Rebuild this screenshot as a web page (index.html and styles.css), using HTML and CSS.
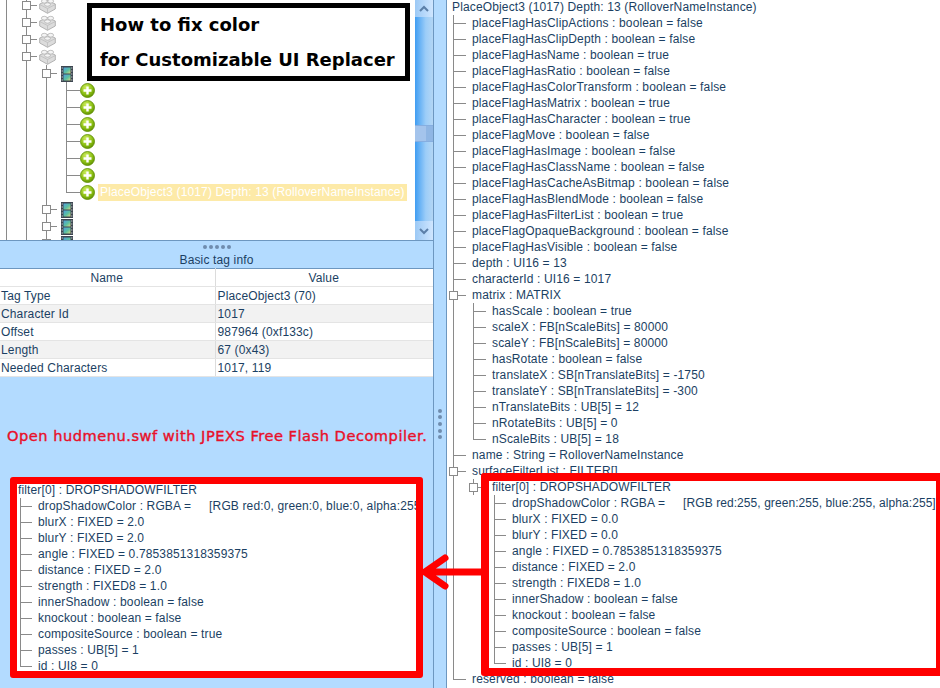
FILE: index.html
```html
<!DOCTYPE html>
<html lang="en">
<head>
<meta charset="utf-8">
<title>JPEXS tag info</title>
<link rel="stylesheet" href="styles.css">
</head>
<body>
<svg class="defs" width="0" height="0" aria-hidden="true">
  <defs>
    <linearGradient id="film" x1="0" y1="0" x2="1" y2="1"><stop offset="0" stop-color="#4f9fe0"/><stop offset=".55" stop-color="#5cc0a0"/><stop offset="1" stop-color="#d8d880"/></linearGradient>
    <radialGradient id="plusg" cx=".4" cy=".3" r=".8"><stop offset="0" stop-color="#cfee60"/><stop offset=".6" stop-color="#88bc10"/><stop offset="1" stop-color="#558400"/></radialGradient>
    <symbol id="lego" viewBox="0 0 17 17">
      <path d="M.7 7 8.500 3.500 16.300 7v5l-7.800 4.300L.7 12z" fill="#dcdcdc" stroke="#ababab" stroke-width=".9"/>
      <path d="M.7 7.500 8.500 11.500l7.800-4M8.500 11.500v4.800" fill="none" stroke="#bcbcbc" stroke-width=".8"/>
      <ellipse cx="5.300" cy="4.200" rx="2.900" ry="1.900" fill="#f4f4f4" stroke="#ababab" stroke-width=".7"/>
      <ellipse cx="11.700" cy="4.200" rx="2.900" ry="1.900" fill="#f4f4f4" stroke="#ababab" stroke-width=".7"/>
      <ellipse cx="8.500" cy="7.500" rx="2.900" ry="1.700" fill="#f4f4f4" stroke="#ababab" stroke-width=".7"/>
    </symbol>
    <symbol id="movie" viewBox="0 0 12 16">
      <rect width="12" height="16" fill="#3d4650"/>
      <rect x="2.500" y="1.500" width="7" height="6" fill="url(#film)"/>
      <rect x="2.500" y="8.500" width="7" height="6" fill="url(#film)"/>
      <path d="M.7 2h1M.7 5h1M.7 8h1M.7 11h1M.7 14h1M10.300 2h1M10.300 5h1M10.300 8h1M10.300 11h1M10.300 14h1" stroke="#e8e8e8" stroke-width="1.200"/>
    </symbol>
    <symbol id="plus" viewBox="0 0 15 15">
      <circle cx="7.500" cy="7.500" r="7" fill="url(#plusg)" stroke="#5c8c00" stroke-width=".8"/>
      <path d="M7.500 3.500v8M3.500 7.500h8" stroke="#fff" stroke-width="2.400"/>
    </symbol>
  </defs>
</svg>
<div class="app">
  <section class="left">
    <div class="tree-pane">
      <div class="tree-view">
        <div class="trow g2"><i class="box"></i><svg class="ico-lego"><use href="#lego"/></svg></div>
        <div class="trow g2"><i class="box"></i><svg class="ico-lego"><use href="#lego"/></svg></div>
        <div class="trow g2"><i class="box"></i><svg class="ico-lego"><use href="#lego"/></svg></div>
        <div class="trow g2"><i class="box"></i><svg class="ico-lego"><use href="#lego"/></svg></div>
        <div class="trow g3"><i class="box"></i><svg class="ico-movie"><use href="#movie"/></svg></div>
        <div class="trow g4"><i class="leaf"></i><svg class="ico-plus"><use href="#plus"/></svg></div>
        <div class="trow g4"><i class="leaf"></i><svg class="ico-plus"><use href="#plus"/></svg></div>
        <div class="trow g4"><i class="leaf"></i><svg class="ico-plus"><use href="#plus"/></svg></div>
        <div class="trow g4"><i class="leaf"></i><svg class="ico-plus"><use href="#plus"/></svg></div>
        <div class="trow g4"><i class="leaf"></i><svg class="ico-plus"><use href="#plus"/></svg></div>
        <div class="trow g4"><i class="leaf"></i><svg class="ico-plus"><use href="#plus"/></svg></div>
        <div class="trow g4 last"><i class="leaf"></i><svg class="ico-plus"><use href="#plus"/></svg><span class="sel">PlaceObject3 (1017) Depth: 13 (RolloverNameInstance)</span></div>
        <div class="trow g3"><i class="box"></i><svg class="ico-movie"><use href="#movie"/></svg></div>
        <div class="trow g3"><i class="box"></i><svg class="ico-movie"><use href="#movie"/></svg></div>
        <div class="trow g3"><i class="box"></i><svg class="ico-movie"><use href="#movie"/></svg></div>
      </div>
      <div class="scrollbar">
        <div class="sb-btn"><svg width="12" height="8" viewBox="0 0 12 8"><path d="M2 6l4-4 4 4" fill="none" stroke="#5b7fa8" stroke-width="2"/></svg></div>
        <div class="sb-track"><div class="sb-thumb"></div></div>
        <div class="sb-btn"><svg width="12" height="8" viewBox="0 0 12 8"><path d="M2 2l4 4 4-4" fill="none" stroke="#5b7fa8" stroke-width="2"/></svg></div>
      </div>
    </div>
    <div class="h-split"><i></i><i></i><i></i><i></i><i></i></div>
    <div class="info-title">Basic tag info</div>
    <table class="info">
      <tr class="head"><th>Name</th><th>Value</th></tr>
      <tr><td>Tag Type</td><td>PlaceObject3 (70)</td></tr>
      <tr class="alt"><td>Character Id</td><td>1017</td></tr>
      <tr><td>Offset</td><td>987964 (0xf133c)</td></tr>
      <tr class="alt"><td>Length</td><td>67 (0x43)</td></tr>
      <tr><td>Needed Characters</td><td>1017, 119</td></tr>
    </table>
    <p class="note">Open hudmenu.swf with JPEXS Free Flash Decompiler.</p>
    <div class="callout callout-left">
      <div class="r"><span>filter[0] : DROPSHADOWFILTER</span></div>
      <div class="r c"><span>dropShadowColor : RGBA =</span><span class="val">[RGB red:0, green:0, blue:0, alpha:255]</span></div>
      <div class="r c"><span>blurX : FIXED = 2.0</span></div>
      <div class="r c"><span>blurY : FIXED = 2.0</span></div>
      <div class="r c"><span>angle : FIXED = 0.7853851318359375</span></div>
      <div class="r c"><span>distance : FIXED = 2.0</span></div>
      <div class="r c"><span>strength : FIXED8 = 1.0</span></div>
      <div class="r c"><span>innerShadow : boolean = false</span></div>
      <div class="r c"><span>knockout : boolean = false</span></div>
      <div class="r c"><span>compositeSource : boolean = true</span></div>
      <div class="r c"><span>passes : UB[5] = 1</span></div>
      <div class="r c end"><span>id : UI8 = 0</span></div>
    </div>
  </section>
  <div class="v-split"><i></i><i></i><i></i><i></i><i></i></div>
  <section class="right">
    <div class="n"><span>PlaceObject3 (1017) Depth: 13 (RolloverNameInstance)</span></div>
    <div class="n l1"><span>placeFlagHasClipActions : boolean = false</span></div>
    <div class="n l1"><span>placeFlagHasClipDepth : boolean = false</span></div>
    <div class="n l1"><span>placeFlagHasName : boolean = true</span></div>
    <div class="n l1"><span>placeFlagHasRatio : boolean = false</span></div>
    <div class="n l1"><span>placeFlagHasColorTransform : boolean = false</span></div>
    <div class="n l1"><span>placeFlagHasMatrix : boolean = true</span></div>
    <div class="n l1"><span>placeFlagHasCharacter : boolean = true</span></div>
    <div class="n l1"><span>placeFlagMove : boolean = false</span></div>
    <div class="n l1"><span>placeFlagHasImage : boolean = false</span></div>
    <div class="n l1"><span>placeFlagHasClassName : boolean = false</span></div>
    <div class="n l1"><span>placeFlagHasCacheAsBitmap : boolean = false</span></div>
    <div class="n l1"><span>placeFlagHasBlendMode : boolean = false</span></div>
    <div class="n l1"><span>placeFlagHasFilterList : boolean = true</span></div>
    <div class="n l1"><span>placeFlagOpaqueBackground : boolean = false</span></div>
    <div class="n l1"><span>placeFlagHasVisible : boolean = false</span></div>
    <div class="n l1"><span>depth : UI16 = 13</span></div>
    <div class="n l1"><span>characterId : UI16 = 1017</span></div>
    <div class="n l1 open"><i class="box"></i><span>matrix : MATRIX</span></div>
    <div class="n l2"><span>hasScale : boolean = true</span></div>
    <div class="n l2"><span>scaleX : FB[nScaleBits] = 80000</span></div>
    <div class="n l2"><span>scaleY : FB[nScaleBits] = 80000</span></div>
    <div class="n l2"><span>hasRotate : boolean = false</span></div>
    <div class="n l2"><span>translateX : SB[nTranslateBits] = -1750</span></div>
    <div class="n l2"><span>translateY : SB[nTranslateBits] = -300</span></div>
    <div class="n l2"><span>nTranslateBits : UB[5] = 12</span></div>
    <div class="n l2"><span>nRotateBits : UB[5] = 0</span></div>
    <div class="n l2 end"><span>nScaleBits : UB[5] = 18</span></div>
    <div class="n l1"><span>name : String = RolloverNameInstance</span></div>
    <div class="n l1 open"><i class="box"></i><span>surfaceFilterList : FILTER[]</span></div>
    <div class="n l2 open"><i class="box"></i></div>
    <div class="n filler"></div>
    <div class="n filler"></div>
    <div class="n filler"></div>
    <div class="n filler"></div>
    <div class="n filler"></div>
    <div class="n filler"></div>
    <div class="n filler"></div>
    <div class="n filler"></div>
    <div class="n filler"></div>
    <div class="n filler"></div>
    <div class="n filler"></div>
    <div class="n l1 end"><span>reserved : boolean = false</span></div>
    <div class="callout callout-right">
      <div class="r"><span>filter[0] : DROPSHADOWFILTER</span></div>
      <div class="r c"><span>dropShadowColor : RGBA =</span><span class="val">[RGB red:255, green:255, blue:255, alpha:255]</span></div>
      <div class="r c"><span>blurX : FIXED = 0.0</span></div>
      <div class="r c"><span>blurY : FIXED = 0.0</span></div>
      <div class="r c"><span>angle : FIXED = 0.7853851318359375</span></div>
      <div class="r c"><span>distance : FIXED = 2.0</span></div>
      <div class="r c"><span>strength : FIXED8 = 1.0</span></div>
      <div class="r c"><span>innerShadow : boolean = false</span></div>
      <div class="r c"><span>knockout : boolean = false</span></div>
      <div class="r c"><span>compositeSource : boolean = false</span></div>
      <div class="r c"><span>passes : UB[5] = 1</span></div>
      <div class="r c end"><span>id : UI8 = 0</span></div>
    </div>
  </section>
  <svg class="arrow" width="62" height="40" viewBox="0 0 62 40"><path d="M60 19H4M24 5 4 19l20 14" fill="none" stroke="#ff0000" stroke-width="7" stroke-linecap="round"/></svg>
  <div class="title-box">
    <div>How to fix color</div>
    <div>for Customizable UI Replacer</div>
  </div>
</div>
</body>
</html>
```
FILE: styles.css
```css
* { box-sizing: border-box; }
html, body { margin: 0; padding: 0; }
body { width: 940px; height: 688px; overflow: hidden; background: #b3dbff; font-family: "Liberation Sans", Arial, sans-serif; font-size: 12px; letter-spacing: .14px; color: #1b3f63; }
.defs { display: block; height: 0; }
.app { position: relative; display: flex; width: 940px; height: 688px; overflow: hidden; }

.left { width: 433px; flex: none; display: flex; flex-direction: column; }
.tree-pane { height: 241px; flex: none; display: flex; background: #fff; border-bottom: 1px solid #6d97c0; overflow: hidden; }
.tree-view { flex: 1; margin-top: -3px; }
.scrollbar { width: 18px; flex: none; display: flex; flex-direction: column; }
.sb-btn { height: 17px; background: linear-gradient(90deg, #9cc9f5, #cfe6ff); display: flex; align-items: center; justify-content: center; }
.sb-btn:last-child { height: 19px; }
.sb-track { flex: 1; background: linear-gradient(90deg, #3f9df2, #9ccdf8 60%, #b3d6f5); padding-top: 108px; }
.sb-thumb { height: 17px; background: linear-gradient(90deg, #a4c4ec 60%, #8fb6e4 60%); border: 1px solid #86aee0; border-width: 1px 0; }

.trow { --g: #8a8a8a; position: relative; height: 17px; display: flex; align-items: center; white-space: nowrap;
  background-image: linear-gradient(var(--g), var(--g)), linear-gradient(var(--g), var(--g)), linear-gradient(var(--g), var(--g)), linear-gradient(var(--g), var(--g));
  background-repeat: no-repeat; background-size: 1px 100%, 1px 100%, 1px 100%, 1px 100%; }
.g2 { padding-left: 22px; background-position: 6px 0, 26px 0, -9px 0, -9px 0; }
.g3 { padding-left: 42px; background-position: 6px 0, 26px 0, 46px 0, -9px 0; }
.g4 { padding-left: 66px; background-position: 6px 0, 26px 0, 46px 0, 66px 0; }
.g4.last { background-size: 1px 100%, 1px 100%, 1px 100%, 1px 9px; }
.box { position: relative; width: 9px; height: 9px; border: 1px solid #8a8a8a; background: #fff; flex: none; }
.box::after { content: ""; position: absolute; left: 100%; top: 3px; width: 7px; height: 1px; background: #8a8a8a; }
.leaf { width: 14px; height: 1px; background: #8a8a8a; flex: none; }
.ico-lego { width: 17px; height: 17px; margin-left: 8px; flex: none; }
.ico-movie { width: 12px; height: 16px; margin-left: 10px; flex: none; }
.ico-plus { width: 15px; height: 15px; flex: none; }
.sel { margin-left: 3px; height: 17px; line-height: 17px; padding: 0 2px; background: #fdeaa8; color: #fff; }

.h-split { height: 12px; flex: none; display: flex; justify-content: center; align-items: center; gap: 2px; }
.h-split i, .v-split i { width: 4px; height: 4px; border-radius: 50%; background: #6f8cae; display: block; flex: none; }
.info-title { height: 15px; flex: none; line-height: 15px; text-align: center; }
.info { width: 433px; border-collapse: collapse; border-top: 1px solid #6d97c0; table-layout: fixed; background: #fff; flex: none; }
.info th, .info td { height: 18px; padding: 0 2px 0 1px; font-weight: normal; font-size: 12px; border-right: 1px solid #dcdcdc; border-bottom: 1px solid #e4e4e4; white-space: nowrap; }
.info td + td { padding-left: 2px; }
.info th:first-child, .info td:first-child { width: 215px; }
.info th:last-child, .info td:last-child { border-right: 0; }
.info .head th { text-align: center; }
.info .alt td { background: #f2f2f2; }
.note { margin: 51px 0 0 7px; font-family: "DejaVu Sans", sans-serif; font-size: 14.6px; letter-spacing: .52px; -webkit-text-stroke: .4px #e8102a; line-height: 16px; color: #e8102a; white-space: nowrap; }

.v-split { width: 14px; flex: none; display: flex; flex-direction: column; align-items: center; justify-content: center; gap: 2.600px; border-left: 1px solid #6d97c0; border-right: 1px solid #6d97c0; padding-top: 160px; }
.right { position: relative; flex: 1; background: #fff; overflow: hidden; }
.n { position: relative; height: 16px; line-height: 16px; padding-left: 5px; white-space: nowrap; display: flex; align-items: center; }
.n:first-child { margin-top: -1px; }
.n.l1, .n.filler { padding-left: 25px; }
.n.l2 { padding-left: 45px; background: linear-gradient(#8a8a8a, #8a8a8a) 26px 0 / 1px 100% no-repeat; }
.n.l2.end { background-size: 1px 9px; }
.n.l1::before, .n.l2::before, .n.filler::before { content: ""; position: absolute; left: 6px; top: 0; bottom: 0; width: 1px; background: #8a8a8a; }
.n.l1.end::before { bottom: 7px; }
.n.l1::after, .n.l2::after { content: ""; position: absolute; height: 1px; width: 13px; background: #8a8a8a; top: 8px; }
.n.l1::after { left: 6px; }
.n.l2::after { left: 26px; }
.n.open .box { position: absolute; top: 4px; z-index: 1; }
.n.l1.open .box { left: 2px; }
.n.l2.open .box { left: 22px; }

.callout { position: absolute; background: #fff; border-style: solid; border-color: #ff0000; border-radius: 3px; overflow: hidden; z-index: 2; }
.callout-left { left: 10px; top: 477px; width: 413px; height: 201px; border-width: 7px; }
.callout-right { left: 34px; top: 473px; width: 463px; height: 203px; border-width: 8px; }
.callout .r { position: relative; height: 16px; line-height: 16px; padding-left: 1px; white-space: nowrap; }
.callout .r:first-child { margin-top: -2px; }
.callout .r.c { padding-left: 21px; }
.callout .r.c::before { content: ""; position: absolute; left: 3px; top: 0; bottom: 0; width: 1px; background: #8a8a8a; }
.callout .r.c::after { content: ""; position: absolute; left: 3px; top: 8px; width: 12px; height: 1px; background: #8a8a8a; }
.callout .r.end::before { bottom: 7px; }
.callout-right .r { padding-left: 3px; }
.callout-right .r.c { padding-left: 23px; }
.callout-right .r.c::before, .callout-right .r.c::after { left: 5px; }
.val { margin-left: 18px; }
.callout-right .val { letter-spacing: .07px; }

.arrow { position: absolute; left: 421px; top: 553px; z-index: 3; }
.title-box { position: absolute; left: 87px; top: 3px; width: 323px; height: 78px; border: 5px solid #000; background: #fff; padding-left: 8px; display: flex; flex-direction: column; justify-content: center; font-family: "DejaVu Sans", sans-serif; font-weight: bold; font-size: 18px; letter-spacing: 0; line-height: 35px; color: #000; z-index: 2; white-space: nowrap; }
```
